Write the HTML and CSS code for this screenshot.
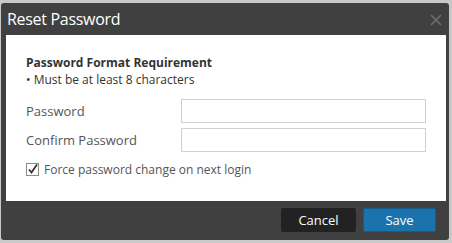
FILE: index.html
```html
<!DOCTYPE html>
<html lang="en">
<head>
    <meta charset="UTF-8">
    <title>Reset Password</title>
    <link rel="stylesheet" href="styles.css">
</head>
<body>
    <div class="dialog">
        <div class="dialog-header">
            <h1>Reset Password</h1>
            <span class="close">
                <svg width="12" height="12" viewBox="0 0 12 12"><path d="M1 1L11 11M11 1L1 11" stroke="#6f6f6f" stroke-width="1.6"/></svg>
            </span>
        </div>
        <div class="dialog-body">
            <h2>Password Format Requirement</h2>
            <p class="rule">&bull; Must be at least 8 characters</p>
            <div class="form-row">
                <label for="pw">Password</label>
                <input type="password" id="pw">
            </div>
            <div class="form-row">
                <label for="pw2">Confirm Password</label>
                <input type="password" id="pw2">
            </div>
            <label class="check">
                <span class="box">
                    <svg width="13" height="13" viewBox="0 0 13 13"><rect x="0.5" y="0.5" width="12" height="12" fill="#fff" stroke="#8a8a8a"/><path d="M3 6.5L5.5 9.5L11 1.5" fill="none" stroke="#333" stroke-width="1.8"/></svg>
                </span>
                Force password change on next login
            </label>
        </div>
        <div class="dialog-footer">
            <button class="btn cancel">Cancel</button>
            <button class="btn save">Save</button>
        </div>
    </div>
</body>
</html>
```

FILE: styles.css
```css
body {
    margin: 0;
    background-color: #c9c9c9;
    font-family: "Open Sans", Arial, sans-serif;
    width: 452px;
    height: 243px;
    padding-top: 3px;
    padding-left: 1px;
    box-sizing: border-box;
}
.dialog {
    width: 448px;
    height: 237px;
    background-color: #404040;
    border-radius: 3px;
    display: flex;
    flex-direction: column;
}
.dialog-header {
    height: 32px;
    display: flex;
    align-items: center;
    justify-content: space-between;
    padding: 0 7px 0 6px;
}
.dialog-header h1 {
    margin: 0;
    font-size: 16px;
    font-weight: normal;
    color: #fff;
    letter-spacing: -0.3px;
}
.close {
    display: flex;
    margin-top: 1px;
}
.dialog-body {
    background-color: #fff;
    margin: 0 3px 0 5px;
    height: 166px;
    padding: 19px 20px 0 20px;
    box-sizing: border-box;
    color: #444;
}
.dialog-body h2 {
    margin: 0;
    font-size: 12px;
    font-weight: bold;
    color: #333;
    line-height: 17px;
}
.rule {
    margin: 0 0 11px 0;
    font-size: 12px;
    line-height: 17px;
    color: #333;
}
.form-row {
    display: flex;
    align-items: center;
    margin-bottom: 5px;
}
.form-row label {
    width: 155px;
    font-size: 13px;
    color: #555;
}
.form-row input {
    width: 245px;
    height: 24px;
    box-sizing: border-box;
    border: 1px solid #cfcfcf;
    margin: 0;
}
.check {
    display: flex;
    align-items: center;
    gap: 5px;
    font-size: 12px;
    color: #555;
    margin-top: 9px;
}
.box {
    display: flex;
}
.dialog-footer {
    display: flex;
    justify-content: flex-end;
    gap: 7px;
    padding: 7px 13px 0 0;
}
.btn {
    height: 24px;
    border: none;
    border-radius: 2px;
    font-family: "Open Sans", Arial, sans-serif;
    font-size: 13px;
    color: #fff;
    padding: 0;
}
.cancel {
    width: 75px;
    background-color: #222;
}
.save {
    width: 73px;
    background-color: #1a73ad;
    border: 1px solid #145a8a;
}
```
